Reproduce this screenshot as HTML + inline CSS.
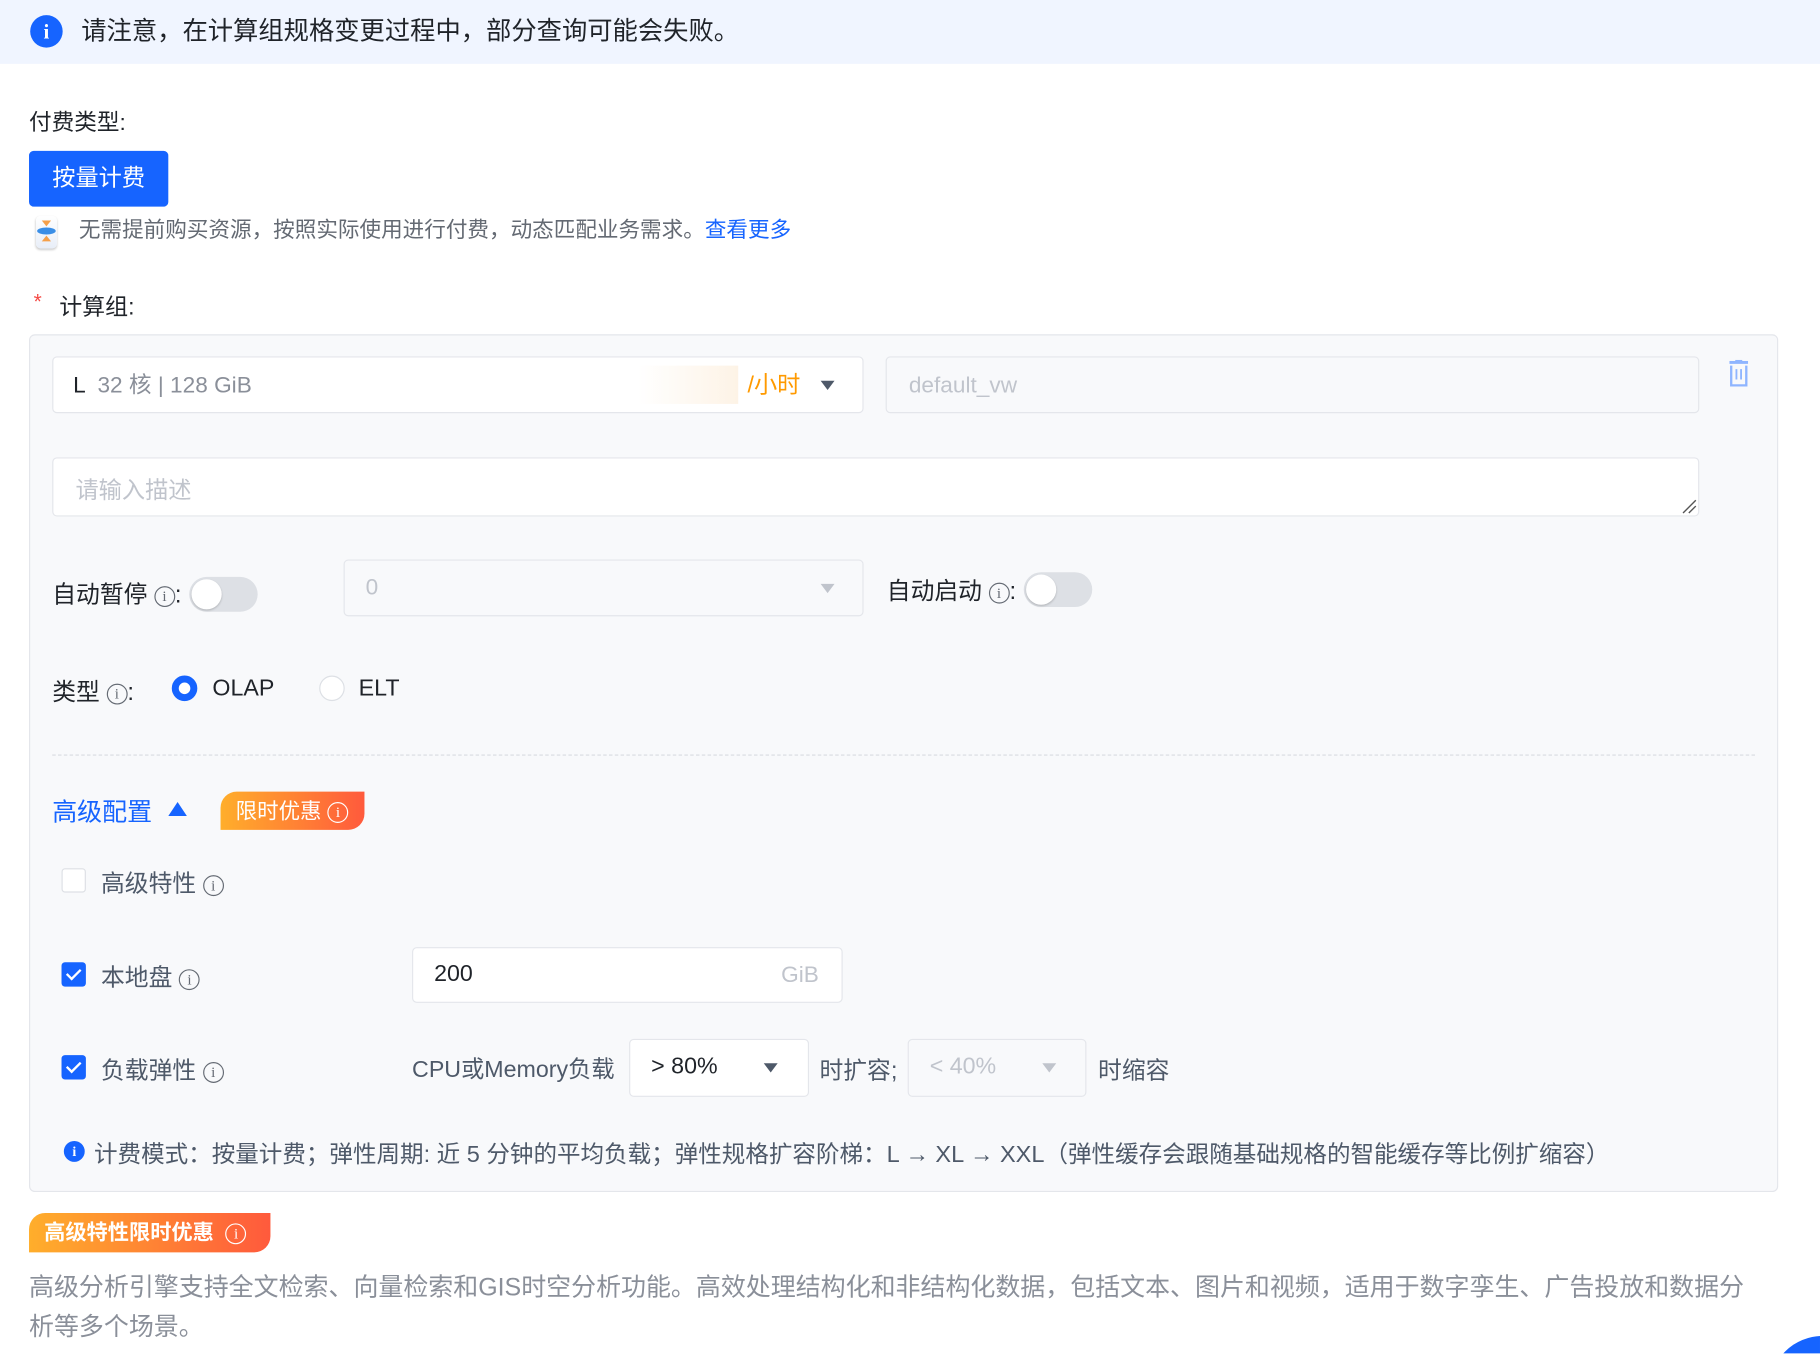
<!DOCTYPE html>
<html><head><meta charset="utf-8"><style>
*{box-sizing:border-box;margin:0;padding:0}
html,body{width:1820px;height:1354px;overflow:hidden;background:#fff}
#w{position:absolute;left:0;top:0;width:1568px;height:1166px;overflow:hidden;transform:scale(1.16071);transform-origin:0 0;font-family:"Liberation Sans","Noto Sans CJK SC",sans-serif;color:#1f2329}
.a{position:absolute;white-space:nowrap}
.ic{display:inline-block;width:18px;height:18px;border:1.5px solid #646a73;border-radius:50%;font-size:13px;line-height:15px;text-align:center;color:#646a73;font-family:"Liberation Serif",serif;vertical-align:middle}
.box{position:absolute;border:1px solid #e4e6eb;border-radius:4px;background:#fff}
.dis{background:#f8f9fb}
.car{position:absolute;width:0;height:0;border-left:6px solid transparent;border-right:6px solid transparent;border-top:8px solid #4e5969}
.sw{position:absolute;width:59px;height:30px;border-radius:15px;background:#dde0e5}
.sw:after{content:"";position:absolute;left:2px;top:2px;width:26px;height:26px;border-radius:50%;background:#fff;box-shadow:0 1px 2px rgba(0,0,0,.2)}
.cb{position:absolute;width:21px;height:21px;border-radius:3px}
.cb.on{background:#1664ff}
.cb.on:after{content:"";position:absolute;left:7px;top:3px;width:5px;height:10px;border:solid #fff;border-width:0 2.5px 2.5px 0;transform:rotate(45deg)}
.cb.off{background:#fff;border:1px solid #dde0e5}
.lb{font-size:20.5px;color:#4e5969}
.badge{position:absolute;background:linear-gradient(90deg,#ffae2b,#ff5a3c);color:#fff;border-radius:14px 0 14px 0;font-size:18.5px}
.badge .ic{border-color:#fff;color:#fff}
</style></head><body><div id="w">
<div class="a" style="left:0;top:0;width:1568px;height:55px;background:#f0f5ff"></div>
<div class="a" style="left:26px;top:13px;width:28px;height:28px;border-radius:50%;background:#1664ff;color:#fff;text-align:center;font:bold 18px/28px 'Liberation Serif',serif">i</div>
<div class="a" style="left:70px;top:13px;font-size:21.8px;line-height:28px">请注意，在计算组规格变更过程中，部分查询可能会失败。</div>

<div class="a" style="left:25px;top:89px;font-size:19.5px;color:#1f2329">付费类型:</div>
<div class="a" style="left:25px;top:130px;width:120px;height:48px;background:#1664ff;border-radius:4px;color:#fff;font-size:20px;line-height:48px;text-align:center">按量计费</div>
<div class="a" style="left:31px;top:186px;width:18px;height:28px;border-radius:4px;background:linear-gradient(#fff,#e8eef8);box-shadow:0 1px 2px #ccc">
<div style="position:absolute;left:1px;top:10px;width:16px;height:6px;border-radius:50%;background:#3a8ee6"></div>
<div style="position:absolute;left:5px;top:4px;border-left:4px solid transparent;border-right:4px solid transparent;border-top:5px solid #f5a04a"></div>
<div style="position:absolute;left:5px;top:17px;border-left:4px solid transparent;border-right:4px solid transparent;border-bottom:5px solid #f5a04a"></div></div>
<div class="a" style="left:68px;top:186px;font-size:18.6px;color:#646a73;line-height:24px">无需提前购买资源，按照实际使用进行付费，动态匹配业务需求。<span style="color:#1664ff">查看更多</span></div>

<div class="a" style="left:29px;top:250px;font-size:18px;color:#f54a45">*</div>
<div class="a" style="left:51px;top:248px;font-size:19.8px">计算组:</div>

<div class="a" style="left:25px;top:288px;width:1507px;height:739px;background:#f8f9fb;border:1px solid #e4e6eb;border-radius:5px"></div>

<div class="box" style="left:45px;top:307px;width:699px;height:49px"></div>
<div class="a" style="left:63px;top:320px;font-size:19.5px;line-height:24px">L <span style="color:#8a8f99">&nbsp;32 核 | 128 GiB</span></div>
<div class="a" style="left:550px;top:315px;width:86px;height:33px;background:linear-gradient(90deg,#fff,#fdf3e6)"></div>
<div class="a" style="left:644px;top:320px;font-size:20px;line-height:24px;color:#ff9a00">/小时</div>
<div class="car" style="left:707px;top:328px"></div>
<div class="box dis" style="left:763px;top:307px;width:701px;height:49px"></div>
<div class="a" style="left:783px;top:321px;font-size:19.5px;color:#c0c4cc">default_vw</div>
<svg class="a" style="left:1487px;top:310px" width="22" height="24" viewBox="0 0 22 24"><rect x="3" y="1" width="16" height="2.5" fill="#8fb5ff"/><rect x="8" y="0" width="6" height="2" fill="#8fb5ff"/><path d="M4.5 5 V22 H17.5 V5" fill="none" stroke="#8fb5ff" stroke-width="2"/><path d="M9 8 V17 M13 8 V17" stroke="#8fb5ff" stroke-width="1.6"/></svg>

<div class="box" style="left:45px;top:394px;width:1419px;height:51px"></div>
<div class="a" style="left:65px;top:406px;font-size:20px;color:#c0c4cc">请输入描述</div>
<svg class="a" style="left:1448px;top:429px" width="14" height="14"><path d="M2 13 L13 2 M7 13 L13 7" stroke="#555" stroke-width="1.2"/></svg>

<div class="a lb" style="left:45px;top:495px;color:#1f2329">自动暂停 <span class="ic">i</span>:</div>
<div class="sw" style="left:163px;top:497px"></div>
<div class="box dis" style="left:296px;top:482px;width:448px;height:49px"></div>
<div class="a" style="left:315px;top:495px;font-size:19.5px;color:#c0c4cc">0</div>
<div class="car" style="left:707px;top:503px;border-top-color:#c0c4cc"></div>
<div class="a lb" style="left:764px;top:492px;color:#1f2329">自动启动 <span class="ic">i</span>:</div>
<div class="sw" style="left:882px;top:493px"></div>

<div class="a lb" style="left:45px;top:579px;color:#1f2329">类型 <span class="ic">i</span>:</div>
<div class="a" style="left:148px;top:582px;width:22px;height:22px;border-radius:50%;border:6px solid #1664ff;background:#fff"></div>
<div class="a" style="left:183px;top:582px;font-size:20px">OLAP</div>
<div class="a" style="left:275px;top:582px;width:22px;height:22px;border-radius:50%;border:1px solid #dde0e5;background:#fff"></div>
<div class="a" style="left:309px;top:582px;font-size:20px">ELT</div>

<div class="a" style="left:45px;top:650px;width:1467px;border-top:1px dashed #d8dbe0"></div>

<div class="a" style="left:45px;top:683px;font-size:21.5px;color:#1664ff">高级配置</div>
<div class="a" style="left:145px;top:691px;border-left:8px solid transparent;border-right:8px solid transparent;border-bottom:12px solid #1664ff"></div>
<div class="badge" style="left:190px;top:682px;width:124px;height:33px;line-height:33px;padding-left:13px">限时优惠 <span class="ic">i</span></div>

<div class="cb off" style="left:53px;top:748px"></div>
<div class="a lb" style="left:87px;top:744px">高级特性 <span class="ic">i</span></div>
<div class="cb on" style="left:53px;top:829px"></div>
<div class="a lb" style="left:87px;top:825px">本地盘 <span class="ic">i</span></div>
<div class="box" style="left:355px;top:816px;width:371px;height:48px"></div>
<div class="a" style="left:374px;top:828px;font-size:20px">200</div>
<div class="a" style="left:673px;top:829px;font-size:19.5px;color:#c0c4cc">GiB</div>

<div class="cb on" style="left:53px;top:909px"></div>
<div class="a lb" style="left:87px;top:905px">负载弹性 <span class="ic">i</span></div>
<div class="a lb" style="left:355px;top:905px;font-size:20px">CPU或Memory负载</div>
<div class="box" style="left:542px;top:895px;width:155px;height:50px"></div>
<div class="a" style="left:561px;top:908px;font-size:20px">&gt; 80%</div>
<div class="car" style="left:658px;top:916px"></div>
<div class="a lb" style="left:706px;top:905px">时扩容;</div>
<div class="box dis" style="left:782px;top:895px;width:154px;height:50px"></div>
<div class="a" style="left:801px;top:908px;font-size:20px;color:#c0c4cc">&lt; 40%</div>
<div class="car" style="left:898px;top:916px;border-top-color:#c0c4cc"></div>
<div class="a lb" style="left:946px;top:905px">时缩容</div>

<div class="a" style="left:55px;top:983px;width:18px;height:18px;border-radius:50%;background:#1664ff;color:#fff;text-align:center;font:bold 12px/18px 'Liberation Serif',serif">i</div>
<div class="a" style="left:81px;top:977px;font-size:20.3px;color:#4e5969">计费模式：按量计费；弹性周期: 近 5 分钟的平均负载；弹性规格扩容阶梯：L → XL → XXL（弹性缓存会跟随基础规格的智能缓存等比例扩缩容）</div>

<div class="badge" style="left:25px;top:1045px;width:208px;height:34px;line-height:34px;padding-left:13px;font-weight:bold;font-size:18.3px">高级特性限时优惠 &nbsp;<span class="ic" style="font-weight:normal">i</span></div>
<div class="a" style="left:25px;top:1092px;width:1496px;white-space:normal;font-size:21.5px;line-height:34px;color:#8a8f99">高级分析引擎支持全文检索、向量检索和GIS时空分析功能。高效处理结构化和非结构化数据，包括文本、图片和视频，适用于数字孪生、广告投放和数据分<br>析等多个场景。</div>

<div class="a" style="left:1525px;top:1151px;width:90px;height:90px;border-radius:50%;background:#1664ff"></div>
</div></body></html>
